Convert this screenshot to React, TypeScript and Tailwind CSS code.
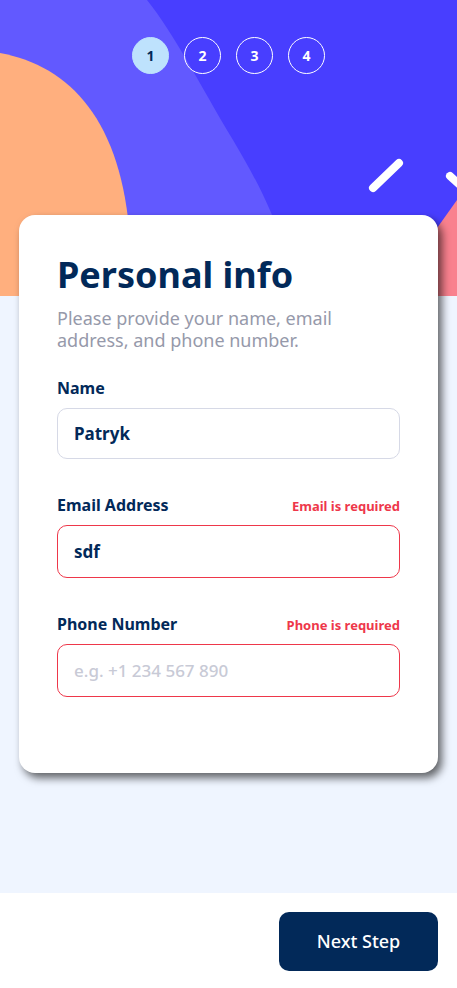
import React from "react";

const steps = [1, 2, 3, 4];

function HeaderArt() {
  return (
    <svg
      className="absolute inset-x-0 top-0 w-full h-[296px]"
      viewBox="0 0 457 296"
      preserveAspectRatio="none"
      aria-hidden="true"
    >
      <rect width="457" height="296" fill="#483eff" />
      <path d="M0 0 L147 0 C175 35 200 85 233 140 C255 178 275 210 300 296 L0 296 Z" fill="#6259ff" />
      <path d="M0 53 C70 66 122 120 130 240 L130 296 L0 296 Z" fill="#ffaf7e" />
      <path d="M420 252 L457 200 L457 296 L420 296 Z" fill="#f9818e" />
      <line x1="373" y1="188" x2="399" y2="163" stroke="#fff" strokeWidth="8" strokeLinecap="round" />
      <line x1="450" y1="176" x2="470" y2="194" stroke="#fff" strokeWidth="8" strokeLinecap="round" />
    </svg>
  );
}

function Field({
  label,
  value,
  placeholder,
  error,
}: {
  label: string;
  value?: string;
  placeholder?: string;
  error?: string;
}) {
  return (
    <div className="flex flex-col">
      <div className="flex items-end justify-between">
        <span className="text-[16px] font-bold text-[#022959] leading-[20px]">{label}</span>
        {error && <span className="text-[13px] font-bold text-[#ee374a] leading-[18px]">{error}</span>}
      </div>
      <input
        readOnly
        value={value ?? ""}
        placeholder={placeholder}
        className={`mt-[10px] w-full rounded-[10px] border bg-white px-4 text-[17px] font-bold text-[#022959] outline-none placeholder:font-medium placeholder:text-[#c8cad6] ${
          error ? "h-[53px] border-[#ee374a]" : "h-[51px] border-[#d6d9e6]"
        }`}
      />
    </div>
  );
}

export default function App() {
  return (
    <div
      className="flex min-h-[988px] w-full flex-col bg-white"
      style={{ fontFamily: '"Noto Sans", "Open Sans", sans-serif' }}
    >
      <div className="relative flex-1 bg-[#eff5ff] pb-[120px]">
        <HeaderArt />
        <div className="relative flex justify-center gap-[15px] pt-[37px]">
          {steps.map((s) => (
            <div
              key={s}
              className={`flex h-[37px] w-[37px] items-center justify-center rounded-full border text-[14px] font-bold ${
                s === 1
                  ? "border-[#bee2fd] bg-[#bee2fd] text-[#022959]"
                  : "border-white text-white"
              }`}
            >
              {s}
            </div>
          ))}
        </div>
        <div className="relative mx-[19px] mt-[141px] h-[558px] rounded-[16px] bg-white px-[38px] pt-[38px] shadow-[4px_5px_9px_rgba(0,0,0,0.6)]">
          <h1 className="text-[36px] font-bold leading-[44px] text-[#022959]">Personal info</h1>
          <p className="mt-[10px] max-w-[300px] text-[18px] leading-[22px] text-[#9699aa]">
            Please provide your name, email address, and phone number.
          </p>
          <div className="mt-[27px] flex flex-col gap-[36px]">
            <Field label="Name" value="Patryk" />
            <Field label="Email Address" value="sdf" error="Email is required" />
            <Field label="Phone Number" placeholder="e.g. +1 234 567 890" error="Phone is required" />
          </div>
        </div>
      </div>
      <div className="flex h-[95px] items-start justify-end bg-white pr-[19px] pt-[19px]">
        <button className="h-[59px] w-[159px] rounded-[10px] bg-[#022959] text-[18px] font-medium text-white">
          Next Step
        </button>
      </div>
    </div>
  );
}
